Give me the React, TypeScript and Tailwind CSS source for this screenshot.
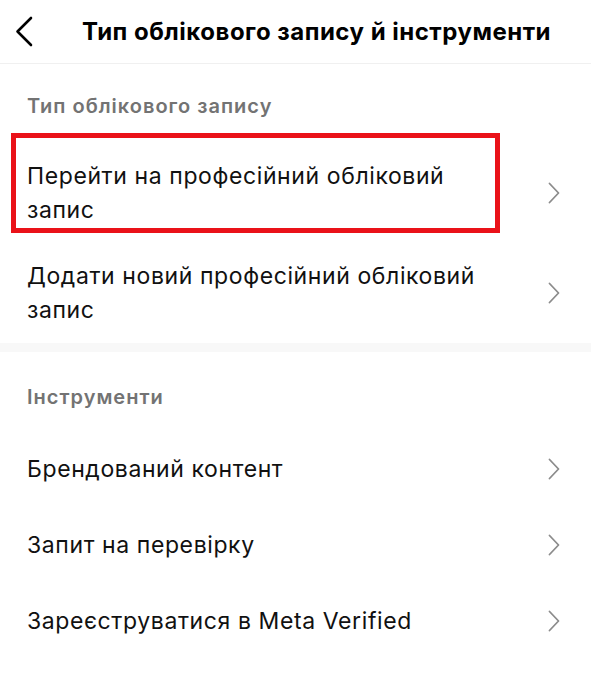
const Chevron = () => (
  <svg width="12" height="22" viewBox="0 0 12 22" fill="none" className="shrink-0">
    <path d="M1.5 1.5 L10.5 11 L1.5 20.5" stroke="#8c8c8c" strokeWidth="1.8" strokeLinecap="round" strokeLinejoin="round" />
  </svg>
);

const Row = ({ lines, boxed }: { lines: string[]; boxed?: boolean }) => (
  <div className={`relative flex items-center justify-between pl-[27px] pr-[31px] ${lines.length > 1 ? 'py-[16px]' : 'h-[76px]'}`}>
    <div className="text-[23px] leading-[34px] tracking-[0.6px] text-[#111]">
      {lines.map((l) => (
        <div key={l}>{l}</div>
      ))}
    </div>
    <Chevron />
    {boxed && (
      <div className="absolute left-[11px] top-[-10px] h-[100px] w-[489px] border-[5px] border-[#ea1219]" />
    )}
  </div>
);

export default function App() {
  return (
    <div className="w-[591px] h-[696px] bg-white overflow-hidden" style={{ fontFamily: 'Inter, "Noto Sans", sans-serif' }}>
      <header className="h-[64px] flex items-center pl-[15px] border-b border-[#f0f0f0]">
        <svg width="18" height="31" viewBox="0 0 18 31" fill="none" className="shrink-0">
          <path d="M16 2 L2.5 15.5 L16 29" stroke="#000" strokeWidth="2.6" strokeLinecap="round" strokeLinejoin="round" />
        </svg>
        <h1 className="ml-[49px] text-[24px] font-bold tracking-[0.5px] text-black leading-none">Тип облікового запису й інструменти</h1>
      </header>

      <section>
        <div className="pl-[27px] pt-[28px] pb-[23px] text-[20px] leading-[28px] tracking-[1px] font-semibold text-[#737373]">
          Тип облікового запису
        </div>
        <Row lines={['Перейти на професійний обліковий', 'запис']} boxed />
        <Row lines={['Додати новий професійний обліковий', 'запис']} />
      </section>

      <div className="h-[9px] bg-[#f8f8f8]" />

      <section>
        <div className="pl-[27px] pt-[31px] pb-[20px] text-[20px] leading-[28px] tracking-[1px] font-semibold text-[#737373]">
          Інструменти
        </div>
        <Row lines={['Брендований контент']} />
        <Row lines={['Запит на перевірку']} />
        <Row lines={['Зареєструватися в Meta Verified']} />
      </section>
    </div>
  );
}
